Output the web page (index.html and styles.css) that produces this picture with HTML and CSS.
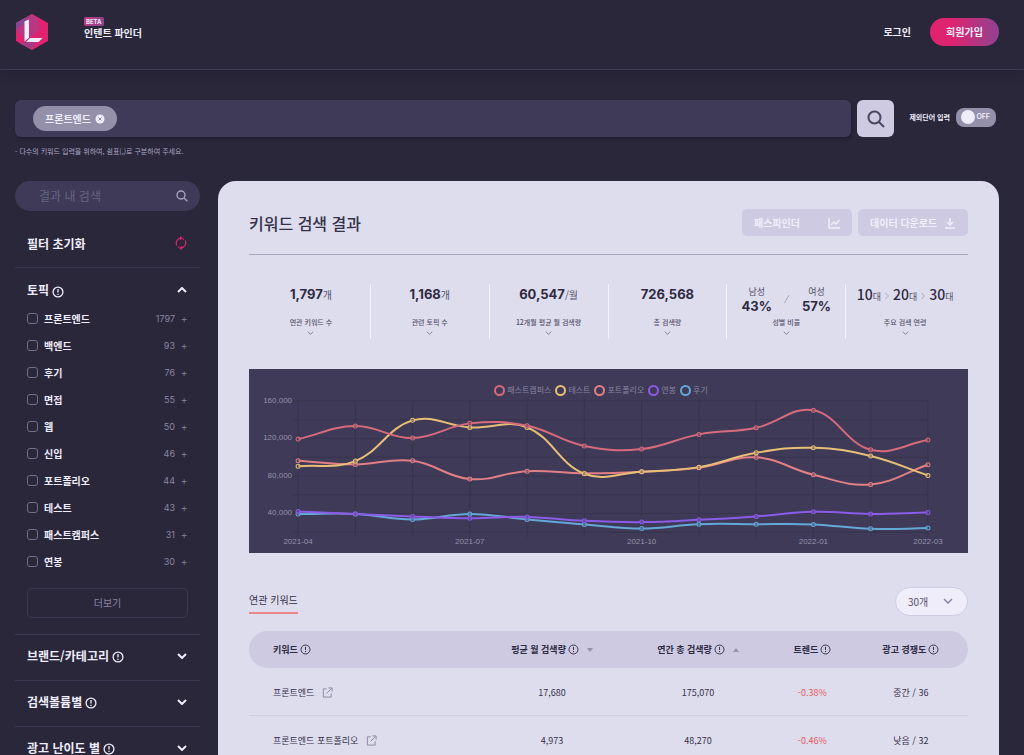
FILE: index.html
```html
<!DOCTYPE html>
<html lang="ko">
<head>
<meta charset="utf-8">
<meta name="viewport" content="width=device-width, initial-scale=1">
<title>인텐트 파인더</title>
<link rel="stylesheet" href="styles.css">
</head>
<body>
<svg class="defs" aria-hidden="true">
  <symbol id="info" viewBox="0 0 12 12"><circle cx="6" cy="6" r="4.9" fill="none" stroke="currentColor"/><path d="M6 3v3.6M6 7.7v1.2" stroke="currentColor"/></symbol>
  <symbol id="chevron" viewBox="0 0 10 6"><path d="M1 1l4 4 4-4" fill="none" stroke="currentColor"/></symbol>
  <symbol id="search" viewBox="0 0 18 18"><circle cx="7.5" cy="7.5" r="6" fill="none" stroke="currentColor"/><path d="M12 12l5 5" fill="none" stroke="currentColor"/></symbol>
  <symbol id="external" viewBox="0 0 12 12"><path d="M5 2H1.500v9h8.500V7M7 1h4v4M10.500 1.500L5 7" fill="none" stroke="currentColor"/></symbol>
</svg>

<header class="header">
  <a class="logo" href="#" aria-label="홈">
    <svg viewBox="0 0 34 38" width="34" height="38">
      <path d="M17 1L33 10v18L17 37 1 28V10z" fill="#e0236f"/>
      <path d="M17 1l5 3 3 12-10 9V8l-5 2v17l-9-11v-6z" fill="#b83780"/>
      <path d="M8 6l7-3-5 7-9 6v-6z" fill="#8a4590"/>
      <path d="M10 29h11l-4 8-13-7z" fill="#a83a84"/>
      <path d="M9.500 8.500l4.500-2v18.500l-4.500 3.500z" fill="#efedfa"/>
      <path d="M14.500 25H27.500l-4 4H11z" fill="#efedfa"/>
      <path d="M10 29l5-4.500" stroke="#c82a74"/>
    </svg>
  </a>
  <a class="brand" href="#"><span class="beta">BETA</span><span>인텐트 파인더</span></a>
  <nav class="account"><a class="login" href="#">로그인</a><button class="signup" type="button">회원가입</button></nav>
</header>

<form class="search">
  <div class="search-row">
    <div class="search-box">
      <span class="chip">프론트엔드
        <button type="button" class="chip-x" aria-label="프론트엔드 삭제"><svg viewBox="0 0 10 10" width="10" height="10"><circle cx="5" cy="5" r="4.500" fill="#efedfa"/><path d="M3.500 3.500l3 3M6.500 3.500l-3 3" stroke="#8f8ba8"/></svg></button>
      </span>
      <input class="search-input" type="text" aria-label="키워드">
    </div>
    <button class="search-go" type="button" aria-label="검색"><svg width="18" height="18"><use href="#search"/></svg></button>
    <label class="exclude" for="exclude">제외단어 입력</label>
    <span class="switch"><input id="exclude" type="checkbox" role="switch"><span class="switch-text">OFF</span></span>
  </div>
  <p class="hint">- 다수의 키워드 입력을 위하여, 쉼표(,)로 구분하여 주세요.</p>
</form>

<div class="layout">
  <aside class="sidebar">
    <div class="filter-search"><input type="text" placeholder="결과 내 검색" aria-label="결과 내 검색"><svg width="12" height="12"><use href="#search"/></svg></div>
    <div class="reset"><span>필터 초기화</span>
      <button type="button" class="plain" aria-label="필터 초기화"><svg viewBox="0 0 12 14" width="12" height="14" fill="none" stroke="#e0236f" stroke-width="1.200"><path d="M1.800 9.500A5 5 0 0 1 6 2.200M10.200 4.500A5 5 0 0 1 6 11.800"/><path d="M5 0l3 2-3 2.300zM7 14l-3-2 3-2.300z" fill="#e0236f" stroke="none"/><path d="M8 2.800l1 .7M4 11.200l-1-.7"/></svg></button>
    </div>
    <section class="topic">
      <button type="button" class="group-head"><span>토픽</span><svg class="i" width="12" height="12"><use href="#info"/></svg><svg class="arrow up" width="10" height="6"><use href="#chevron"/></svg></button>
      <ul class="topics">
        <li><label><input type="checkbox">프론트엔드</label><span>1797</span><button type="button" aria-label="프론트엔드 추가">+</button></li>
        <li><label><input type="checkbox">백엔드</label><span>93</span><button type="button" aria-label="백엔드 추가">+</button></li>
        <li><label><input type="checkbox">후기</label><span>76</span><button type="button" aria-label="후기 추가">+</button></li>
        <li><label><input type="checkbox">면접</label><span>55</span><button type="button" aria-label="면접 추가">+</button></li>
        <li><label><input type="checkbox">웹</label><span>50</span><button type="button" aria-label="웹 추가">+</button></li>
        <li><label><input type="checkbox">신입</label><span>46</span><button type="button" aria-label="신입 추가">+</button></li>
        <li><label><input type="checkbox">포트폴리오</label><span>44</span><button type="button" aria-label="포트폴리오 추가">+</button></li>
        <li><label><input type="checkbox">테스트</label><span>43</span><button type="button" aria-label="테스트 추가">+</button></li>
        <li><label><input type="checkbox">패스트캠퍼스</label><span>31</span><button type="button" aria-label="패스트캠퍼스 추가">+</button></li>
        <li><label><input type="checkbox">연봉</label><span>30</span><button type="button" aria-label="연봉 추가">+</button></li>
      </ul>
      <button type="button" class="more">더보기</button>
    </section>
    <button type="button" class="group-head closed"><span>브랜드/카테고리</span><svg class="i" width="12" height="12"><use href="#info"/></svg><svg class="arrow" width="10" height="6"><use href="#chevron"/></svg></button>
    <button type="button" class="group-head closed"><span>검색볼륨별</span><svg class="i" width="12" height="12"><use href="#info"/></svg><svg class="arrow" width="10" height="6"><use href="#chevron"/></svg></button>
    <button type="button" class="group-head closed"><span>광고 난이도 별</span><svg class="i" width="12" height="12"><use href="#info"/></svg><svg class="arrow" width="10" height="6"><use href="#chevron"/></svg></button>
  </aside>

  <main class="panel">
    <div class="title-row">
      <h1>키워드 검색 결과</h1>
      <button type="button" class="action">패스파인더<svg viewBox="0 0 12 12" width="12" height="12" fill="none" stroke="currentColor" stroke-width="1.400"><path d="M1 1v10h11M3 8l3-3 2 2 3.500-4"/></svg></button>
      <button type="button" class="action">데이터 다운로드<svg viewBox="0 0 12 12" width="12" height="12" fill="none" stroke="currentColor" stroke-width="1.400"><path d="M6 1v7M3 5l3 3 3-3M1 11h10"/></svg></button>
    </div>

    <div class="stats">
      <div class="stat"><p class="value"><b>1,797</b>개</p><p class="name">연관 키워드 수</p><svg width="7" height="4"><use href="#chevron"/></svg></div>
      <div class="stat"><p class="value"><b>1,168</b>개</p><p class="name">관련 토픽 수</p><svg width="7" height="4"><use href="#chevron"/></svg></div>
      <div class="stat"><p class="value"><b>60,547</b>/월</p><p class="name">12개월 평균 월 검색량</p><svg width="7" height="4"><use href="#chevron"/></svg></div>
      <div class="stat"><p class="value"><b>726,568</b></p><p class="name">총 검색량</p><svg width="7" height="4"><use href="#chevron"/></svg></div>
      <div class="stat"><div class="value gender"><span>남성<b>43%</b></span><svg viewBox="0 0 6 10" width="6" height="10"><path d="M.5 9L5 1" stroke="#aaa6c2"/></svg><span>여성<b>57%</b></span></div><p class="name">성별 비율</p><svg width="7" height="4"><use href="#chevron"/></svg></div>
      <div class="stat"><p class="value ages"><span><b>10</b>대</span><svg viewBox="0 0 4 8" width="4" height="8"><path d="M.5 1l3 3-3 3" fill="none" stroke="#aaa6c2"/></svg><span><b>20</b>대</span><svg viewBox="0 0 4 8" width="4" height="8"><path d="M.5 1l3 3-3 3" fill="none" stroke="#aaa6c2"/></svg><span><b>30</b>대</span></p><p class="name">주요 검색 연령</p><svg width="7" height="4"><use href="#chevron"/></svg></div>
    </div>

    <div class="chart">
      <ul class="legend">
        <li class="s1">패스트캠퍼스</li><li class="s2">테스트</li><li class="s3">포트폴리오</li><li class="s4">연봉</li><li class="s5">후기</li>
      </ul>
      <svg id="plot" viewBox="0 0 718 184" role="img" aria-label="월별 검색량"></svg>
    </div>

    <div class="table-bar">
      <h2>연관 키워드</h2>
      <div class="per-page"><select aria-label="표시 개수"><option>30개</option><option>50개</option></select><svg width="10" height="6"><use href="#chevron"/></svg></div>
    </div>

    <table class="keywords">
      <thead><tr>
        <th class="c-key"><span>키워드<svg width="11" height="11"><use href="#info"/></svg></span></th>
        <th class="c-num"><span>평균 월 검색량<svg width="11" height="11"><use href="#info"/></svg><i class="sort down"></i></span></th>
        <th class="c-num"><span>연간 총 검색량<svg width="11" height="11"><use href="#info"/></svg><i class="sort"></i></span></th>
        <th class="c-trend"><span>트렌드<svg width="11" height="11"><use href="#info"/></svg></span></th>
        <th class="c-comp"><span>광고 경쟁도<svg width="11" height="11"><use href="#info"/></svg></span></th>
      </tr></thead>
      <tbody>
        <tr><td><a href="#">프론트엔드<svg width="11" height="11"><use href="#external"/></svg></a></td><td>17,680</td><td>175,070</td><td class="fall">-0.38%</td><td>중간 / 36</td></tr>
        <tr><td><a href="#">프론트엔드 포트폴리오<svg width="11" height="11"><use href="#external"/></svg></a></td><td>4,973</td><td>48,270</td><td class="fall">-0.46%</td><td>낮음 / 32</td></tr>
      </tbody>
    </table>
  </main>
</div>
<script src="chart.js"></script>
</body>
</html>
```

FILE: styles.css
```css
* { box-sizing: border-box; }
body {
  margin: 0; height: 100vh; overflow: hidden; display: flex; flex-direction: column;
  background: #2a273b; color: #efedfa;
  font: 10px/16px "Noto Sans CJK KR", sans-serif;
}
button, input, select { font: inherit; color: inherit; margin: 0; }
button { border: 0; padding: 0; background: none; cursor: pointer; }
a { color: inherit; text-decoration: none; }
p, h1, h2, ul { margin: 0; padding: 0; }
ul { list-style: none; }
svg { display: block; flex: none; }
.defs { position: absolute; width: 0; height: 0; }

.header {
  flex: none; display: flex; align-items: center; height: 70px; padding: 0 25px 6px 15px;
  border-bottom: 1px solid #3d3952; box-shadow: 0 3px 8px #252235;
}
.brand { display: flex; flex-direction: column; align-items: flex-start; margin: 0 0 8px 35px; font-weight: 700; line-height: 13px; }
.beta {
  padding: 0 2px; border-radius: 2px; background: linear-gradient(90deg, #b83b80, #8f438f);
  font: bold 6px/9px Inter, sans-serif;
}
.account { display: flex; align-items: center; gap: 19px; margin-left: auto; font-weight: 700; }
.signup { width: 69px; height: 28px; border-radius: 14px; background: linear-gradient(90deg, #e0236f 30%, #8f438f); }

.search { flex: none; padding: 30px 28px 0 15px; }
.search-row { display: flex; align-items: center; }
.search-box {
  flex: 1; display: flex; align-items: center; height: 37px; padding-left: 18px;
  border-radius: 6px; background: #3e3a57; box-shadow: 1px 2px 3px #211e30;
}
.chip { display: flex; align-items: center; gap: 4px; height: 25px; padding: 0 12px; border-radius: 13px; background: #9490aa; font-weight: 700; }
.search-input { flex: 1; border: 0; outline: 0; background: none; }
.search-go { display: grid; place-items: center; width: 37px; height: 37px; margin-left: 6px; border-radius: 6px; background: #cdcae2; color: #4a465f; stroke-width: 2; }
.exclude { margin: 0 6px 4px 15px; font-size: 7px; font-weight: 700; }
.switch { position: relative; display: block; height: 19px; margin-bottom: 3px; }
.switch input { appearance: none; display: flex; align-items: center; width: 40px; height: 19px; padding-left: 5px; border-radius: 8px; background: #9490aa; }
.switch input::before { content: ""; width: 14px; height: 14px; border-radius: 50%; background: #efedfa; }
.switch-text { position: absolute; right: 6px; top: 0; font: 600 7px/18px Inter, sans-serif; pointer-events: none; }
.hint { margin-top: 6px; color: #aaa6c2; font-size: 7px; }

.layout { flex: 1; display: flex; align-items: stretch; gap: 18px; min-height: 0; padding: 22px 25px 0 15px; }
.sidebar { flex: none; width: 185px; }
.filter-search { display: flex; align-items: center; height: 30px; padding: 0 12px 0 24px; border-radius: 15px; background: #3e3a57; color: #aaa6c2; stroke-width: 2; }
.filter-search input { flex: 1; min-width: 0; padding: 0; border: 0; outline: 0; background: none; font-size: 12px; }
.filter-search input::placeholder { color: #68647f; opacity: 1; }
.reset { display: flex; align-items: center; justify-content: space-between; height: 57px; padding: 10px 13px 0 12px; border-bottom: 1px solid #3d3952; font-size: 12px; font-weight: 700; }
.plain { margin-bottom: 2px; }
.topic { padding-bottom: 16px; border-bottom: 1px solid #3d3952; }
.group-head { display: flex; align-items: center; gap: 3px; width: 100%; height: 44px; padding: 0 13px 0 12px; font-size: 12px; font-weight: 700; line-height: 20px; }
.group-head .i { margin-top: 3px; stroke-width: 1.300; }
.arrow { margin-left: auto; stroke-width: 2; }
.up { transform: rotate(180deg); }
.closed { height: 46px; padding-bottom: 4px; border-bottom: 1px solid #3d3952; }
.topics { margin-top: -7px; padding: 0 12px; }
.topics li { display: flex; align-items: center; height: 27px; color: #8985a0; font-family: Inter, sans-serif; font-size: 9px; }
.topics label { display: flex; align-items: center; gap: 6px; margin-right: auto; color: #efedfa; font: 700 10px/16px "Noto Sans CJK KR", sans-serif; }
.topics input { appearance: none; width: 11px; height: 11px; border: 1px solid #726e8a; border-radius: 3px; }
.topics button { width: 8px; margin-left: 5px; font-size: 11px; font-weight: 300; }
.more { display: block; width: 161px; height: 30px; margin: 13px 12px 0; border: 1px solid #3d3952; border-radius: 5px; color: #8985a0; }

.panel { flex: 1; min-width: 0; padding: 28px 31px 0; border-radius: 18px 18px 0 0; background: #dedded; color: #35314a; }
.title-row { display: flex; align-items: flex-start; gap: 6px; height: 46px; border-bottom: 1px solid #a9a5bd; }
h1 { margin-right: auto; font-size: 16px; font-weight: 500; line-height: 28px; }
.action { display: flex; align-items: center; justify-content: space-between; width: 110px; height: 27px; padding: 0 12px; border-radius: 5px; background: #cdcae2; color: #f1effb; font-weight: 700; }

.stats { display: grid; grid-template-columns: repeat(6, 1fr); margin: 29px 0 30px; padding: 0 4px 0 2px; }
.stat { display: flex; flex-direction: column; align-items: center; height: 55px; border-left: 1px solid #f4f2fc; color: #56526c; stroke-width: 1; }
.stat:first-child { border-color: transparent; }
.value { display: flex; align-items: baseline; height: 30px; line-height: 20px; white-space: nowrap; }
.value b { font: bold 13px/20px Inter, sans-serif; color: #2e2a43; }
.name { margin-bottom: 1px; font-size: 7px; font-weight: 500; line-height: 16px; }
.gender { align-items: center; gap: 12px; font-size: 9px; }
.gender span { display: flex; flex-direction: column; align-items: center; line-height: 15px; }
.gender b { line-height: 15px; }
.ages { align-items: baseline; gap: 4px; font-size: 9px; }
.ages b { font: 500 14px/20px "Noto Sans CJK KR", sans-serif; }

.chart { position: relative; background: #3e3a57; }
.chart > svg { width: 100%; height: auto; }
.legend { position: absolute; top: 13px; left: 0; right: 0; display: flex; justify-content: center; gap: 4px; padding-right: 14px; padding-left: 0; color: #8985a0; font-size: 8px; }
.legend { padding-right: 15px; }
.legend li { display: flex; align-items: center; gap: 2px; }
.legend li::before { content: ""; box-sizing: border-box; width: 11px; height: 11px; border: 2px solid var(--line); border-radius: 50%; }
.s1 { --line: #d76b7c; }
.s2 { --line: #e8bf77; }
.s3 { --line: #e27f85; }
.s4 { --line: #8c5be8; }
.s5 { --line: #64a8d8; }
.grid { stroke: #38344e; stroke-width: 1; }
.axis { fill: #9692aa; font: 8px "Liberation Sans", sans-serif; }
.line { fill: none; stroke: var(--line); stroke-width: 2; }
.dot { fill: #3e3a57; fill-opacity: 0.4; stroke: var(--line); stroke-width: 1; }

.table-bar { display: flex; justify-content: space-between; align-items: flex-start; margin: 34px 0 15px; }
h2 { margin-top: 3px; padding-bottom: 2px; border-bottom: 2px solid #ee8589; font-size: 10px; font-weight: 400; line-height: 20px; }
.per-page { position: relative; }
.per-page select { display: block; appearance: none; width: 73px; height: 29px; padding: 0 12px; border: 1px solid #cdcae2; border-radius: 15px; background: #efedfa; color: #56526c; }
.per-page svg { position: absolute; right: 15px; top: 11px; color: #8985a0; stroke-width: 1.500; pointer-events: none; }

.keywords { width: 100%; table-layout: fixed; border-collapse: separate; border-spacing: 0; text-align: center; font-size: 9px; }
th { height: 37px; padding: 0; background: #cdcae2; font-weight: 700; color: #2e2a43; }
th:first-child { border-radius: 19px 0 0 19px; }
th:last-child { border-radius: 0 19px 19px 0; }
th span { display: inline-flex; align-items: center; gap: 2px; }
td { height: 48px; padding: 2px 0 0; border-bottom: 1px solid #d0cee0; }
th:first-child, td:first-child { padding-left: 24px; text-align: left; }
td a { display: inline-flex; align-items: center; gap: 8px; }
td a svg { color: #8985a0; }
.c-key { width: 32%; }
.c-num { width: 20.3%; }
.c-trend { width: 11.5%; }
.c-comp { width: 15.9%; }
.sort { margin-left: 6px; border: 3px solid transparent; border-top: 0; border-bottom: 4px solid #9692aa; }
.down { transform: rotate(180deg); }
.fall { color: #e5585f; }
```

FILE: chart.js
```js
const series = [
  ["s5", [39.3, 39.6, 33.6, 39.6, 33.6, 28.3, 24, 28.6, 28.6, 28.3, 23.6, 24.4]],
  ["s4", [42.2, 39.3, 36.9, 35, 36.4, 32.2, 30.8, 33.2, 36.9, 41.8, 39.6, 41.1]],
  ["s3", [96.2, 92.4, 96.2, 76.7, 85.2, 82.8, 84.5, 88.8, 99.9, 81.3, 71, 92]],
  ["s2", [90.3, 95.9, 139.4, 131.9, 131.9, 82.4, 84.5, 89.5, 104.8, 110.1, 101.3, 80.6]],
  ["s1", [119.4, 133.3, 120.5, 136.2, 133.6, 112, 108.7, 124.4, 131.5, 150.1, 108, 118.3]]
];
const months = { 0: "2021-04", 3: "2021-07", 6: "2021-10", 9: "2022-01", 11: "2022-03" };
const left = 49, right = 678, top_ = 32, bottom = 163;
const x = i => left + (right - left) * i / 11;
const y = v => top_ + (160 - v) * (bottom - top_) / 140;
const n = v => v.toFixed(1);

// Control points on both sides of each point, weighted by distance to the neighbours.
function curve(values) {
  const p = values.map((v, i) => [x(i), y(v)]);
  const c = p.map((q, i) => {
    const a = p[i - 1] || q, b = p[i + 1] || q;
    const d1 = Math.hypot(q[0] - a[0], q[1] - a[1]), d2 = Math.hypot(b[0] - q[0], b[1] - q[1]);
    const f1 = 0.4 * d1 / (d1 + d2), f2 = 0.4 * d2 / (d1 + d2);
    const dx = b[0] - a[0], dy = b[1] - a[1];
    return [q[0] - f1 * dx, q[1] - f1 * dy, q[0] + f2 * dx, q[1] + f2 * dy];
  });
  let d = `M${n(p[0][0])} ${n(p[0][1])}`;
  for (let i = 1; i < p.length; i++) {
    d += `C${n(c[i - 1][2])} ${n(c[i - 1][3])} ${n(c[i][0])} ${n(c[i][1])} ${n(p[i][0])} ${n(p[i][1])}`;
  }
  return d;
}

let out = "";
for (let v = 20; v <= 160; v += 20) {
  out += `<path class="grid" d="M${left - 5} ${n(y(v))}H${right}"/>`;
  if (v % 40 === 0) out += `<text class="axis" x="43" y="${n(y(v) + 2)}" text-anchor="end">${v},000</text>`;
}
for (let i = 0; i < 12; i++) {
  out += `<path class="grid" d="M${n(x(i))} ${top_}V${bottom + 5}"/>`;
  if (months[i]) out += `<text class="axis" x="${n(x(i))}" y="175" text-anchor="middle">${months[i]}</text>`;
}
for (const [name, values] of series) {
  out += `<g class="${name}"><path class="line" d="${curve(values)}"/>`;
  values.forEach((v, i) => { out += `<circle class="dot" cx="${n(x(i))}" cy="${n(y(v))}" r="2"/>`; });
  out += "</g>";
}
document.getElementById("plot").innerHTML = out;
```
